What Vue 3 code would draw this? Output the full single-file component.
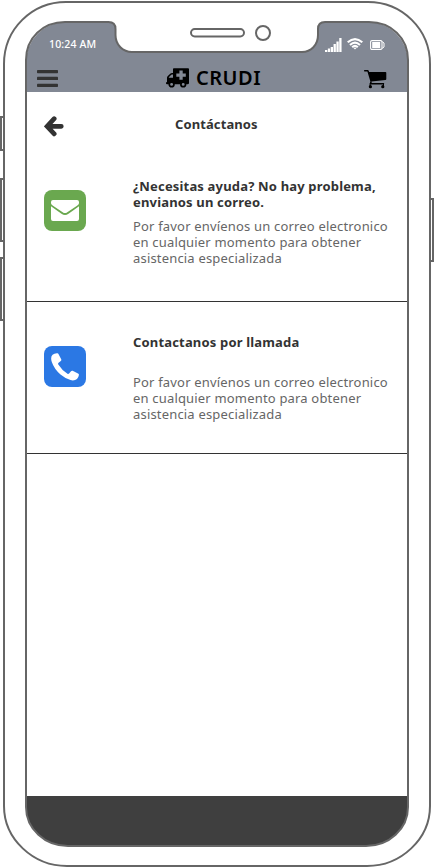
<script setup>
const bars = [2, 3.5, 5, 8, 10.5, 14]
const contacts = [
  {
    kind: 'mail',
    title: '¿Necesitas ayuda? No hay problema,\nenvianos un correo.',
  },
  {
    kind: 'call',
    title: 'Contactanos por llamada',
  },
]
const description = 'Por favor envíenos un correo electronico\nen cualquier momento para obtener\nasistencia especializada'
</script>

<template>
  <div class="phone">
    <main class="screen">
      <header class="header">
        <div class="status">
          <span class="time">10:24 AM</span>
          <div class="indicators">
            <svg class="signal" width="17" height="14" viewBox="0 0 17 14" fill="#fff">
              <rect v-for="(h, i) in bars" :key="h" :x="i * 2.85" :y="14 - h" width="2.3" :height="h" />
            </svg>
            <svg class="wifi" width="16" height="12" viewBox="0 0 16 12">
              <g fill="none" stroke="#fff" stroke-width="2.1">
                <path d="M.7 4.3Q8-2.1 15.3 4.3" />
                <path d="M3 6.9Q8 2.3 13 6.9" />
                <path d="M5.2 9.3Q8 6.4 10.8 9.3" />
              </g>
              <path d="M6.5 10Q8 8.8 9.5 10L8 11.6Z" fill="#fff" />
            </svg>
            <svg class="battery" width="15" height="10" viewBox="0 0 15 10">
              <rect x=".6" y=".6" width="11.4" height="8.8" rx="1.4" fill="none" stroke="#fff" stroke-width="1.1" />
              <rect x="2.2" y="2" width="8" height="6" fill="#fff" />
              <path d="M12.2 1.6L14 3V7L12.2 8.4" fill="none" stroke="#fff" />
            </svg>
          </div>
        </div>
        <nav class="bar">
          <svg class="menu" width="21" height="17" viewBox="0 0 21 17" fill="#333">
            <rect width="21" height="3.3" rx=".7" />
            <rect y="6.8" width="21" height="3.3" rx=".7" />
            <rect y="13.7" width="21" height="3.3" rx=".7" />
          </svg>
          <div class="brand">
            <svg width="23" height="20" viewBox="0 0 23 20">
              <path fill-rule="evenodd" d="M7.8.3H22.1Q23 .3 23 1.2V15Q23 16.2 21.6 16.2H1Q0 16.2 0 15.2V14.3H1V9.7Q1 9 1.6 8.3L4.2 5.7Q5 5 6 5H7V1.2Q7 .3 7.8.3ZM2.8 9.8H7V6.6H5.8Q5.4 6.6 5 7L3 9Q2.8 9.3 2.8 9.8Z" />
              <path d="M13.4 2.4H16.7V5.4H19.8V8.7H16.7V11.7H13.4V8.7H10.3V5.4H13.4Z" fill="#828894" />
              <g fill="#828894" stroke="#000" stroke-width="1.7">
                <circle cx="5.6" cy="16.4" r="2.3" />
                <circle cx="17.2" cy="16.4" r="2.3" />
              </g>
            </svg>
            <span>CRUDI</span>
          </div>
          <svg class="cart" width="23" height="19" viewBox="0 0 23 19">
            <path d="M.6 0H3.6Q4.5 0 4.8.9L5.1 1.9H21.4Q22.3 1.9 22.3 2.8V9Q22.3 10 21.4 10.1L7.4 11.6L7.8 13H19.5Q20.2 13 20.2 13.7T19.5 14.4H6.5Q5.4 14.4 5.8 13.2L6.4 11.4L3.4 1.5H.6Q0 1.5 0 .8T.6 0Z" />
            <path d="M6.1 13.5V16.5M19.5 13.5V16.5" stroke="#000" />
            <circle cx="6.4" cy="16.7" r="1.6" />
            <circle cx="18.8" cy="16.7" r="1.6" />
          </svg>
        </nav>
      </header>

      <div class="heading">
        <svg width="20" height="21" viewBox="0 0 20 21">
          <path d="M10.2 2.7L3.1 10.3L10.2 17.9M4 10.3H17.3" fill="none" stroke="#333" stroke-width="4.7" stroke-linecap="round" />
        </svg>
        <h1>Contáctanos</h1>
      </div>

      <section v-for="c in contacts" :key="c.kind" class="contact" :class="c.kind">
        <div class="tile">
          <svg v-if="c.kind === 'mail'" width="28" height="21" viewBox="0 0 28 21" fill="#fff">
            <path d="M2 0H26Q28 0 28 2V3.2Q28 4.3 26 5.7L16.3 12.2Q14 13.9 11.7 12.2L2 5.7Q0 4.3 0 3.2V2Q0 0 2 0Z" />
            <path d="M0 6.3Q1 7.3 10.5 13.7Q14 16.4 17.5 13.7Q27 7.3 28 6.3V19Q28 21 26 21H2Q0 21 0 19Z" />
          </svg>
          <svg v-else width="28" height="28" viewBox="0 0 28 28" fill="#fff">
            <path d="M5.9.3Q7.1 0 7.6 1.2L10.2 6.3Q10.6 7.2 9.8 8L7.6 9.8Q6.7 10.5 7.3 11.5Q10.8 17.2 16.5 20.7Q17.4 21.2 18.1 20.4L20 18.2Q20.7 17.4 21.6 17.8L27 20.6Q28.1 21.1 27.9 22Q27.5 24.7 26 26Q23.5 28 19.5 27.1Q14.8 25.9 9.5 21.5Q3.2 16 .8 9Q-.8 4 1.6 1.7Q3.2.4 5.9.3Z" />
          </svg>
        </div>
        <div class="copy">
          <h2>{{ c.title }}</h2>
          <p>{{ description }}</p>
        </div>
      </section>
      <footer></footer>
    </main>

    <svg class="frame" width="434" height="867" viewBox="0 0 434 867">
      <path class="shell" fill-rule="evenodd" d="M66 2H368C402 2 430 29 430 64V806C430 839 401 866 367 866H67C33 866 4 839 4 806V64C4 29 32 2 66 2ZM65 22C43 22 26 38 26 60V807C26 829 45 846 68 846H366C389 846 408 829 408 807V60C408 38 391 22 369 22H325Q318 22 318 29V35C318 45 311 52 302 52H132C123 52 115.5 45 115.5 35V29Q115.5 22 108.5 22Z" />
      <g class="lines">
        <rect x="191" y="29" width="53" height="7.5" rx="3.75" />
        <circle cx="263" cy="33" r="7" />
        <path d="M4 117H1V150H4M4 179H1V241H4M4 258H1V320H4M430 199H433V261H430" />
      </g>
    </svg>
  </div>
</template>

<style>
body { background: #fff; }
</style>

<style scoped>
.phone {
  position: relative;
  box-sizing: border-box;
  width: 434px;
  height: 867px;
  padding: 22px 26px 21px;
  overflow: hidden;
  font-family: "Noto Sans", sans-serif;
  color: #333;
}
.frame { position: absolute; inset: 0; pointer-events: none; }
.shell { fill: #fff; stroke: #666; stroke-width: 2; }
.lines { fill: none; stroke: #666; stroke-width: 2; }
svg { display: block; flex: none; }
.screen {
  display: flex;
  flex-direction: column;
  height: 824px;
  overflow: hidden;
  border-radius: 40px;
}
.header { height: 70px; background: #828894; flex: none; }
.status {
  display: flex;
  justify-content: space-between;
  height: 42px;
  padding: 14px 23px 0 23px;
  box-sizing: border-box;
}
.time { color: #fff; font-size: 10.5px; line-height: 17px; letter-spacing: .15px; font-weight: 500; }
.indicators { display: flex; }
.signal { margin: 2px 5px 0 0; }
.wifi { margin-top: 2px; }
.battery { margin: 4px 0 0 7px; }
.bar { display: flex; align-items: flex-start; padding: 6px 21px 0 11px; }
.brand { display: flex; width: 96px; margin-left: 108px; gap: 7px; align-items: flex-start; }
.brand svg { margin-top: -2px; }
.brand span { color: #000; font-size: 20px; line-height: 20px; margin-top: -2px; font-weight: 600; letter-spacing: .5px; }
.cart { margin-left: auto; }
.heading {
  display: flex;
  height: 76px;
  padding: 24px 0 0 17.5px;
  box-sizing: border-box;
  flex: none;
}
h1, h2, p { margin: 0; }
h1 { margin: -1px 0 0 111.5px; font-size: 13px; line-height: 18px; font-weight: 700; letter-spacing: .1px; }
.contact {
  display: flex;
  flex: none;
  box-sizing: border-box;
  border-bottom: 1px solid #333;
}
.mail { height: 134px; padding: 10px 0 0 18px; }
.call { height: 152px; padding: 32px 0 0 18px; }
.tile {
  display: flex;
  align-items: center;
  justify-content: center;
  width: 42px;
  height: 41px;
  margin-top: 12px;
  border-radius: 8px;
  flex: none;
}
.mail .tile { background: #6aa84f; }
.call .tile { background: #2b78e4; }
.copy { margin-left: 47px; line-height: 16px; white-space: pre; }
h2 { font-size: 13px; font-weight: 700; letter-spacing: .17px; }
p { margin-top: 8px; font-size: 13px; color: #666; letter-spacing: .18px; }
.call p { margin-top: 24px; }
footer { height: 50px; margin-top: auto; background: #3f3f3f; flex: none; }
</style>
